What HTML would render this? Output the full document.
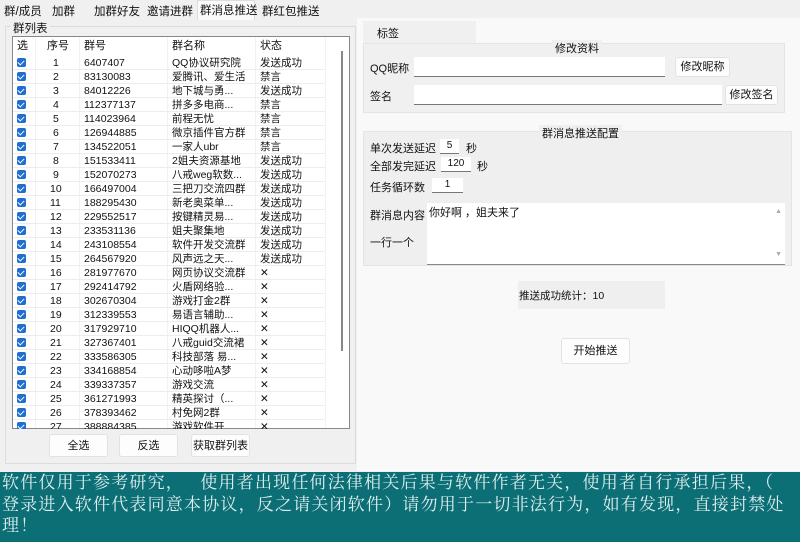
<!DOCTYPE html>
<html><head><meta charset="utf-8"><style>
*{margin:0;padding:0;box-sizing:border-box}
body{width:800px;height:542px;overflow:hidden;background:#f0f0f0;font-family:"Liberation Sans","Noto Sans CJK SC",sans-serif;font-size:11px;color:#111;position:relative}
.a{position:absolute;white-space:nowrap}
.btn{position:absolute;background:#fdfdfd;border:1px solid #e2e2e2;border-radius:3px;text-align:center;font-size:11px}
.in{position:absolute;background:#fff;border-bottom:1px solid #777}
.row{position:absolute;left:13px;width:312px;height:14px;border-bottom:1px solid #ededed;font-size:10.5px;line-height:14px}
.cb{position:absolute;left:4px;top:2px;width:9px;height:9px;background:#1f6fd0;border-radius:2px}
.cb:after{content:"";position:absolute;left:2px;top:1px;width:3px;height:5px;border:solid #fff;border-width:0 1px 1px 0;transform:rotate(45deg)}
.row span{position:absolute}
</style></head><body>
<div class="a" style="left:4px;top:3px;font-size:11.5px">群/成员</div>
<div class="a" style="left:52px;top:3px;font-size:11.5px">加群</div>
<div class="a" style="left:94px;top:3px;font-size:11.5px">加群好友</div>
<div class="a" style="left:147px;top:3px;font-size:11.5px">邀请进群</div>
<div class="a" style="left:197px;top:0;width:58px;height:20px;background:#fafafa;border:1px solid #ddd;border-bottom:none"></div>
<div class="a" style="left:200px;top:2px;font-size:11.5px">群消息推送</div>
<div class="a" style="left:262px;top:3px;font-size:11.5px">群红包推送</div>

<div class="a" style="left:5px;top:26px;width:351px;height:438px;border:1px solid #dcdcdc;background:#f0f0f0"></div>
<div class="a" style="left:11px;top:20px;background:#f0f0f0;padding:0 2px;font-size:11.5px">群列表</div>
<div class="a" style="left:12px;top:36px;width:338px;height:393px;background:#fff;border:1px solid #888;overflow:hidden">
<div style="position:absolute;left:0;top:0;width:336px;height:19px;font-size:11px;line-height:19px">
<span class="a" style="left:4px">选</span><span class="a" style="left:34px">序号</span><span class="a" style="left:71px">群号</span><span class="a" style="left:159px">群名称</span><span class="a" style="left:247px">状态</span></div>
<div class="a" style="left:22px;top:0;width:1px;height:393px;background:#f2f2f2"></div>
<div class="a" style="left:66px;top:0;width:1px;height:393px;background:#f2f2f2"></div>
<div class="a" style="left:154px;top:0;width:1px;height:393px;background:#f2f2f2"></div>
<div class="a" style="left:242px;top:0;width:1px;height:393px;background:#f2f2f2"></div>
<div class="a" style="left:312px;top:0;width:1px;height:393px;background:#f2f2f2"></div>
<div class="a" style="left:328px;top:14px;width:2px;height:300px;background:#888"></div>
</div>
<div id="rows"></div>
<div class="btn" style="left:49px;top:434px;width:59px;height:23px;line-height:22px">全选</div>
<div class="btn" style="left:119px;top:434px;width:59px;height:23px;line-height:22px">反选</div>
<div class="btn" style="left:191px;top:434px;width:59px;height:23px;line-height:22px">获取群列表</div>

<div class="a" style="left:357px;top:18px;width:443px;height:453px;background:#f9f9f9"></div>
<div class="a" style="left:363px;top:21px;width:113px;height:22px;background:#f0f0f0;padding:4px 14px">标签</div>
<div class="a" style="left:363px;top:43px;width:422px;height:70px;background:#f0f0f0;border:1px solid #e4e4e4"></div>
<div class="a" style="left:552px;top:40px;background:#f0f0f0;padding:0 3px">修改资料</div>
<div class="a" style="left:370px;top:60px">QQ昵称</div>
<div class="in" style="left:414px;top:57px;width:251px;height:20px"></div>
<div class="btn" style="left:675px;top:57px;width:55px;height:20px;line-height:18px">修改昵称</div>
<div class="a" style="left:370px;top:88px">签名</div>
<div class="in" style="left:414px;top:85px;width:308px;height:20px"></div>
<div class="btn" style="left:725px;top:85px;width:53px;height:20px;line-height:18px">修改签名</div>

<div class="a" style="left:363px;top:131px;width:429px;height:135px;background:#efefef;border:1px solid #e4e4e4"></div>
<div class="a" style="left:539px;top:125px;background:#efefef;padding:0 3px">群消息推送配置</div>
<div class="a" style="left:370px;top:140px">单次发送延迟</div>
<div class="in" style="left:440px;top:139px;width:19px;height:15px;text-align:center;font-size:10px;line-height:14px">5</div>
<div class="a" style="left:466px;top:140px">秒</div>
<div class="a" style="left:370px;top:158px">全部发完延迟</div>
<div class="in" style="left:441px;top:157px;width:30px;height:15px;text-align:center;font-size:10px;line-height:14px">120</div>
<div class="a" style="left:477px;top:158px">秒</div>
<div class="a" style="left:370px;top:179px">任务循环数</div>
<div class="in" style="left:432px;top:178px;width:31px;height:15px;text-align:center;font-size:10px;line-height:14px">1</div>
<div class="a" style="left:370px;top:207px">群消息内容</div>
<div class="a" style="left:370px;top:234px">一行一个</div>
<div class="in" style="left:427px;top:203px;width:358px;height:62px;border-bottom:1px solid #888"><span class="a" style="left:2px;top:1px">你好啊 ，姐夫来了</span>
<span class="a" style="right:3px;top:5px;font-size:7px;color:#aaa">▲</span><span class="a" style="right:3px;top:48px;font-size:7px;color:#aaa">▼</span></div>

<div class="a" style="left:518px;top:281px;width:147px;height:28px;background:#efefef;padding:7px 1px;font-size:10.5px">推送成功统计：10</div>
<div class="btn" style="left:561px;top:338px;width:69px;height:26px;line-height:25px">开始推送</div>

<div class="a" style="left:0;top:472px;width:800px;height:70px;background:#0d6f76;color:#dfeeee;font-size:17px;letter-spacing:1.2px;line-height:21.5px;padding-left:2px;font-family:'Liberation Serif','Noto Serif CJK SC',serif">软件仅用于参考研究，&nbsp;&nbsp;&nbsp;使用者出现任何法律相关后果与软件作者无关，使用者自行承担后果，（<br>登录进入软件代表同意本协议，反之请关闭软件）请勿用于一切非法行为，如有发现，直接封禁处<br>理！</div>

<script>
var d=[["6407407","QQ协议研究院","发送成功"],["83130083","爱腾讯、爱生活","禁言"],["84012226","地下城与勇...","发送成功"],["112377137","拼多多电商...","禁言"],["114023964","前程无忧","禁言"],["126944885","微京插件官方群","禁言"],["134522051","一家人ubr","禁言"],["151533411","2姐夫资源基地","发送成功"],["152070273","八戒weg软数...","发送成功"],["166497004","三把刀交流四群","发送成功"],["188295430","新老奥菜单...","发送成功"],["229552517","按键精灵易...","发送成功"],["233531136","姐夫聚集地","发送成功"],["243108554","软件开发交流群","发送成功"],["264567920","风声远之天...","发送成功"],["281977670","网页协议交流群","✕"],["292414792","火盾网络验...","✕"],["302670304","游戏打金2群","✕"],["312339553","易语言辅助...","✕"],["317929710","HIQQ机器人...","✕"],["327367401","八戒guid交流裙","✕"],["333586305","科技部落 易...","✕"],["334168854","心动哆啦A梦","✕"],["339337357","游戏交流","✕"],["361271993","精英探讨（...","✕"],["378393462","村免网2群","✕"],["388884385","游戏软件开","✕"]];
var h="";for(var i=0;i<d.length;i++){var t=56+i*14;
h+='<div class="row" style="top:'+t+'px;'+(i==26?'height:9px;overflow:hidden;border:none':'')+'"><div class="cb"></div><span style="left:'+(i<9?40:37)+'px">'+(i+1)+'</span><span style="left:71px">'+d[i][0]+'</span><span style="left:159px">'+d[i][1]+'</span><span style="left:247px">'+d[i][2]+'</span></div>';}
document.getElementById("rows").innerHTML=h;
</script>
</body></html>
